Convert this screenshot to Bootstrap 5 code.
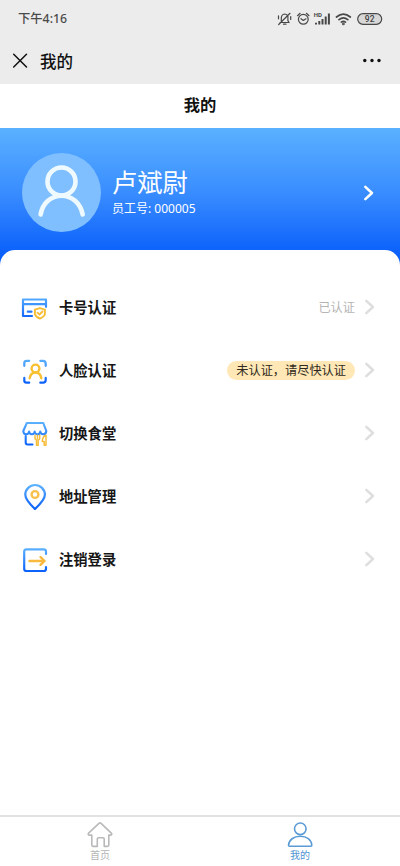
<!DOCTYPE html>
<html lang="zh-CN">
<head>
<meta charset="utf-8">
<meta name="viewport" content="width=device-width, initial-scale=1">
<title>我的</title>
<link href="https://cdn.jsdelivr.net/npm/bootstrap@5.3.0/dist/css/bootstrap.min.css" rel="stylesheet">
<style>
body{font-family:"Noto Sans CJK SC","Noto Sans",sans-serif;color:#161616;overflow:hidden}
svg{display:block;flex:none;fill:none;stroke-linecap:round;stroke-linejoin:round}
.phone-top{background:#ececec;height:84px}
.statusbar{height:38px;padding:0 17px 0 18px;color:#4a4a4a;font-size:12.3px;font-weight:500}
.statusbar .clock{font-family:"Noto Sans","Noto Sans CJK SC",sans-serif}
.titlebar{height:46px;padding:0 18px 0 12px;color:#111;font-size:16.5px}
.titlebar .caption-text{font-weight:500;line-height:22px;padding-bottom:1px}
.page-title{height:44px;font-size:16.3px;font-weight:700;color:#111;line-height:40px}
.hero{height:142px;background:linear-gradient(#5ab1ff 0,#3a8dff 45%,#0b61fb 88%,#0559f5 100%);padding:25px 24px 0 22px;color:#fff}
.avatar{width:79px;height:79px;background:#80bfff}
.who{margin:10px 0 0 11px}
.user-name{font-size:25.3px;line-height:37px;font-weight:400}
.user-no{font-family:"Noto Sans","Noto Sans CJK SC",sans-serif;font-size:12px;line-height:17px}
.hero-chev{margin-top:5px}
.sheet{margin-top:-20.5px;border-radius:15px 15px 0 0;padding-top:26px;z-index:1}
.menu-row{height:63px;padding:0 23px 0 21px;font-size:14.3px;font-weight:700}
.menu-row .label{margin-left:11px}
.status-text{font-size:12.2px;font-weight:400;color:#b5b5b5;margin-right:8px}
.pill{font-size:12.2px;font-weight:400;color:#2f2920;background:#ffe8b6;height:19px;line-height:18px;padding:0 9px;margin-right:8px}
.tabs{height:51px;border-top:2px solid #e2e2e2;font-size:10px;line-height:14px;color:#b5b5b5}
.tabs .on{color:#5094d2}
</style>
</head>
<body class="bg-white">
<svg width="0" height="0" class="position-absolute">
  <defs>
    <linearGradient id="blue" gradientUnits="userSpaceOnUse" x1="0" y1="2" x2="0" y2="25"><stop stop-color="#5db2ff"/><stop offset="1" stop-color="#0c61fa"/></linearGradient>
    <symbol id="chev" viewBox="0 0 14 18"><path d="M3.300 2.800 10 9l-6.700 6.200" stroke="currentColor" stroke-width="2.500" stroke-linecap="round"/></symbol>
  </defs>
</svg>
<div class="vh-100 d-flex flex-column">
  <header class="phone-top">
    <div class="statusbar d-flex align-items-center justify-content-between">
      <span class="clock">下午4:16</span>
      <svg width="106" height="16" viewBox="277 11 106 16" stroke="#484848" stroke-width="1.200">
        <path d="M280 22.500h8.500M281.300 22v-4q.2-3.500 3.300-4 2.600.2 3.300 2.500v4.200l1.200 1.800M283.500 24.200h2.500M278.700 24.500 290 13.300M278.500 15.800v3M290.700 16.500v3"/>
        <circle cx="303.300" cy="19.300" r="4.900"/><path d="m301 18.700 2.300 1.800 2.700-1.700M297.500 15.700l2.600-2.400M309 15.700l-2.600-2.400"/>
        <g stroke-width="2" stroke-linecap="butt"><path d="M316 24.500v-1.700M319.300 24.500v-3.500M322.500 24.500v-5.500M325.700 24.500v-8M328.900 24.500v-11"/></g>
        <text x="313.800" y="17.200" font-family="Roboto,sans-serif" font-size="6" font-weight="700" fill="#484848" stroke="none">HD</text>
        <g stroke-width="1.700"><path d="M336.500 17q6.900-5.600 13.800 0M339 19.700q4.400-3.500 8.800 0M341.300 22.100q2.100-1.500 4.200 0"/><circle cx="343.400" cy="23.900" r=".5"/></g>
        <rect x="357.700" y="13.700" width="24" height="10.600" rx="5.300" fill="#d8d8d8"/>
        <text x="369.700" y="22" text-anchor="middle" font-family="Roboto,sans-serif" font-size="8.500" font-weight="500" fill="#404040" stroke="none">92</text>
      </svg>
    </div>
    <div class="titlebar d-flex align-items-center">
      <svg width="16" height="16" viewBox="0 0 16 16" stroke="#111" stroke-width="1.500"><path d="m1.700 1.200 12.800 12.800M14.500 1.200 1.700 14"/></svg>
      <span class="caption-text ms-2 ps-1">我的</span>
      <svg class="ms-auto" width="20" height="6" viewBox="0 0 20 6"><g fill="#111"><circle cx="2.800" cy="2.500" r="1.700"/><circle cx="10" cy="2.500" r="1.700"/><circle cx="17" cy="2.500" r="1.700"/></g></svg>
    </div>
  </header>
  <div class="page-title text-center">我的</div>
  <section class="hero d-flex align-items-start">
    <div class="avatar rounded-circle">
      <svg width="79" height="79" viewBox="0 0 79 79" stroke="#effaff" stroke-width="4.600"><circle cx="39.500" cy="28.500" r="14"/><path d="M18.600 61.500c2-11.500 10.500-18.800 20.900-18.800s18.900 7.300 21.200 18.800"/></svg>
    </div>
    <div class="who">
      <div class="user-name">卢斌尉</div>
      <div class="user-no">员工号: 000005</div>
    </div>
    <svg class="hero-chev ms-auto mt-4" width="14" height="32" viewBox="0 0 14 18"><use href="#chev"/></svg>
  </section>
  <main class="sheet bg-white flex-grow-1 position-relative">
    <div class="menu-row d-flex align-items-center">
      <svg width="27" height="27" viewBox="0 0 27 27" stroke="url(#blue)" stroke-width="2.200">
        <path d="M11 22H2V5.500h23v7.300M2.500 10.200H25M6.800 17.700h3.700"/><path d="m18.900 14.200 5 1.400v4.300q-.7 3-5 4.600-4.200-1.700-5-4.600v-4.300z" stroke="#f5bd32" stroke-width="1.900"/><path d="m16.500 18.700 2 1.800 3-3" stroke="#f5bd32" stroke-width="1.800"/>
      </svg>
      <span class="label">卡号认证</span><span class="status-text ms-auto">已认证</span>
      <svg width="14" height="18" color="#dedede"><use href="#chev"/></svg>
    </div>
    <div class="menu-row d-flex align-items-center">
      <svg width="27" height="27" viewBox="0 0 27 27" stroke="url(#blue)" stroke-width="2.200">
        <path d="M3.300 8.800V6q0-2.200 2.200-2.200h2.700M19.300 3.800h2.700q2.700 0 2.700 2.700v2.300M3.300 20.800v2.700q0 2.200 2.200 2.200h2.700M19.300 25.700h2.700q2.700 0 2.700-2.700v-2.200"/><g stroke="#f8c030" stroke-width="2.400"><circle cx="14.500" cy="11.500" r="3.900"/><path d="M8.700 21.200c.5-3.500 2.900-5.700 5.800-5.700s5.300 2.200 5.800 5.700"/></g>
      </svg>
      <span class="label">人脸认证</span><span class="pill rounded-pill ms-auto">未认证，请尽快认证</span>
      <svg width="14" height="18" color="#dedede"><use href="#chev"/></svg>
    </div>
    <div class="menu-row d-flex align-items-center">
      <svg width="27" height="27" viewBox="0 0 27 27" stroke="url(#blue)" stroke-width="2.100">
        <path d="M5.800 3h16.500l3 8q-.4 3.300-3 3.300-2.800 0-3-2.800-.4 2.800-2.800 2.800-2.500 0-2.800-2.800-.2 2.800-2.800 2.800t-2.800-2.800q-.2 2.800-3 2.800-2.600 0-2.800-3.300zM4.700 16v6.500q0 2 2 2h4.800"/>
        <g stroke="#f6bd3d" stroke-width="1.500"><path d="M14 15.300v3.200q.2 1.300 1.500 1.500v5.300h1.700V20q1.300-.2 1.500-1.500v-3.200M16.400 15.300v3.400M25 25.300V15.200q-3.300 1-3.800 6.200h2v3.900z"/></g>
      </svg>
      <span class="label">切换食堂</span>
      <svg class="ms-auto" width="14" height="18" color="#dedede"><use href="#chev"/></svg>
    </div>
    <div class="menu-row d-flex align-items-center">
      <svg width="27" height="27" viewBox="0 0 27 27" stroke="url(#blue)" stroke-width="2.200">
        <path d="M14 26C8.300 20.700 4.300 16.400 4.300 11.800a9.800 9.800 0 0 1 19.600 0C23.900 16.400 19.700 20.700 14 26Z"/><circle cx="14" cy="11.500" r="3.400" stroke="#f9c04d" stroke-width="2.400"/>
      </svg>
      <span class="label">地址管理</span>
      <svg class="ms-auto" width="14" height="18" color="#dedede"><use href="#chev"/></svg>
    </div>
    <div class="menu-row d-flex align-items-center">
      <svg width="27" height="27" viewBox="0 0 27 27" stroke="url(#blue)" stroke-width="2.200">
        <path d="M25 8V5.500q0-2.200-2.200-2.200H5.500Q3.200 3.300 3.200 5.500v17.200q0 2.300 2.300 2.300h17.300q2.200 0 2.200-2v-2"/><path d="M8.500 15H23.500M19.500 11l4 4-4 3.800" stroke="#f9b93c" stroke-width="2.400"/>
      </svg>
      <span class="label">注销登录</span>
      <svg class="ms-auto" width="14" height="18" color="#dedede"><use href="#chev"/></svg>
    </div>
  </main>
  <nav class="tabs row g-0 text-center">
    <div class="col-6 d-flex flex-column align-items-center pt-1">
      <svg width="28" height="27" viewBox="0 0 28 27" stroke="#b9b9b9" stroke-width="1.600"><path d="M13.200 2.200q.8-.6 1.600 0l10.500 9.900q1.200 1.600-.7 2h-1.800v10q0 1.300-1.300 1.300h-3.300v-7.300q0-1.300-1.300-1.300h-4.300q-1.300 0-1.300 1.300v7.300H7.100q-1.300 0-1.300-1.300v-10H3.300q-1.800-.4-.7-2z"/></svg>
      <span>首页</span>
    </div>
    <div class="col-6 on d-flex flex-column align-items-center pt-1">
      <svg width="28" height="27" viewBox="0 0 28 27" stroke="#5b9bd5" stroke-width="1.600"><circle cx="14.300" cy="7.800" r="5.800"/><path d="M2.500 24.300c.4-5.500 5.200-9 11.700-9s11.300 3.500 11.600 9q0 1-1 1H3.500q-1 0-1-1Z"/></svg>
      <span>我的</span>
    </div>
  </nav>
</div>
<script src="https://cdn.jsdelivr.net/npm/bootstrap@5.3.0/dist/js/bootstrap.bundle.min.js"></script>
</body>
</html>
